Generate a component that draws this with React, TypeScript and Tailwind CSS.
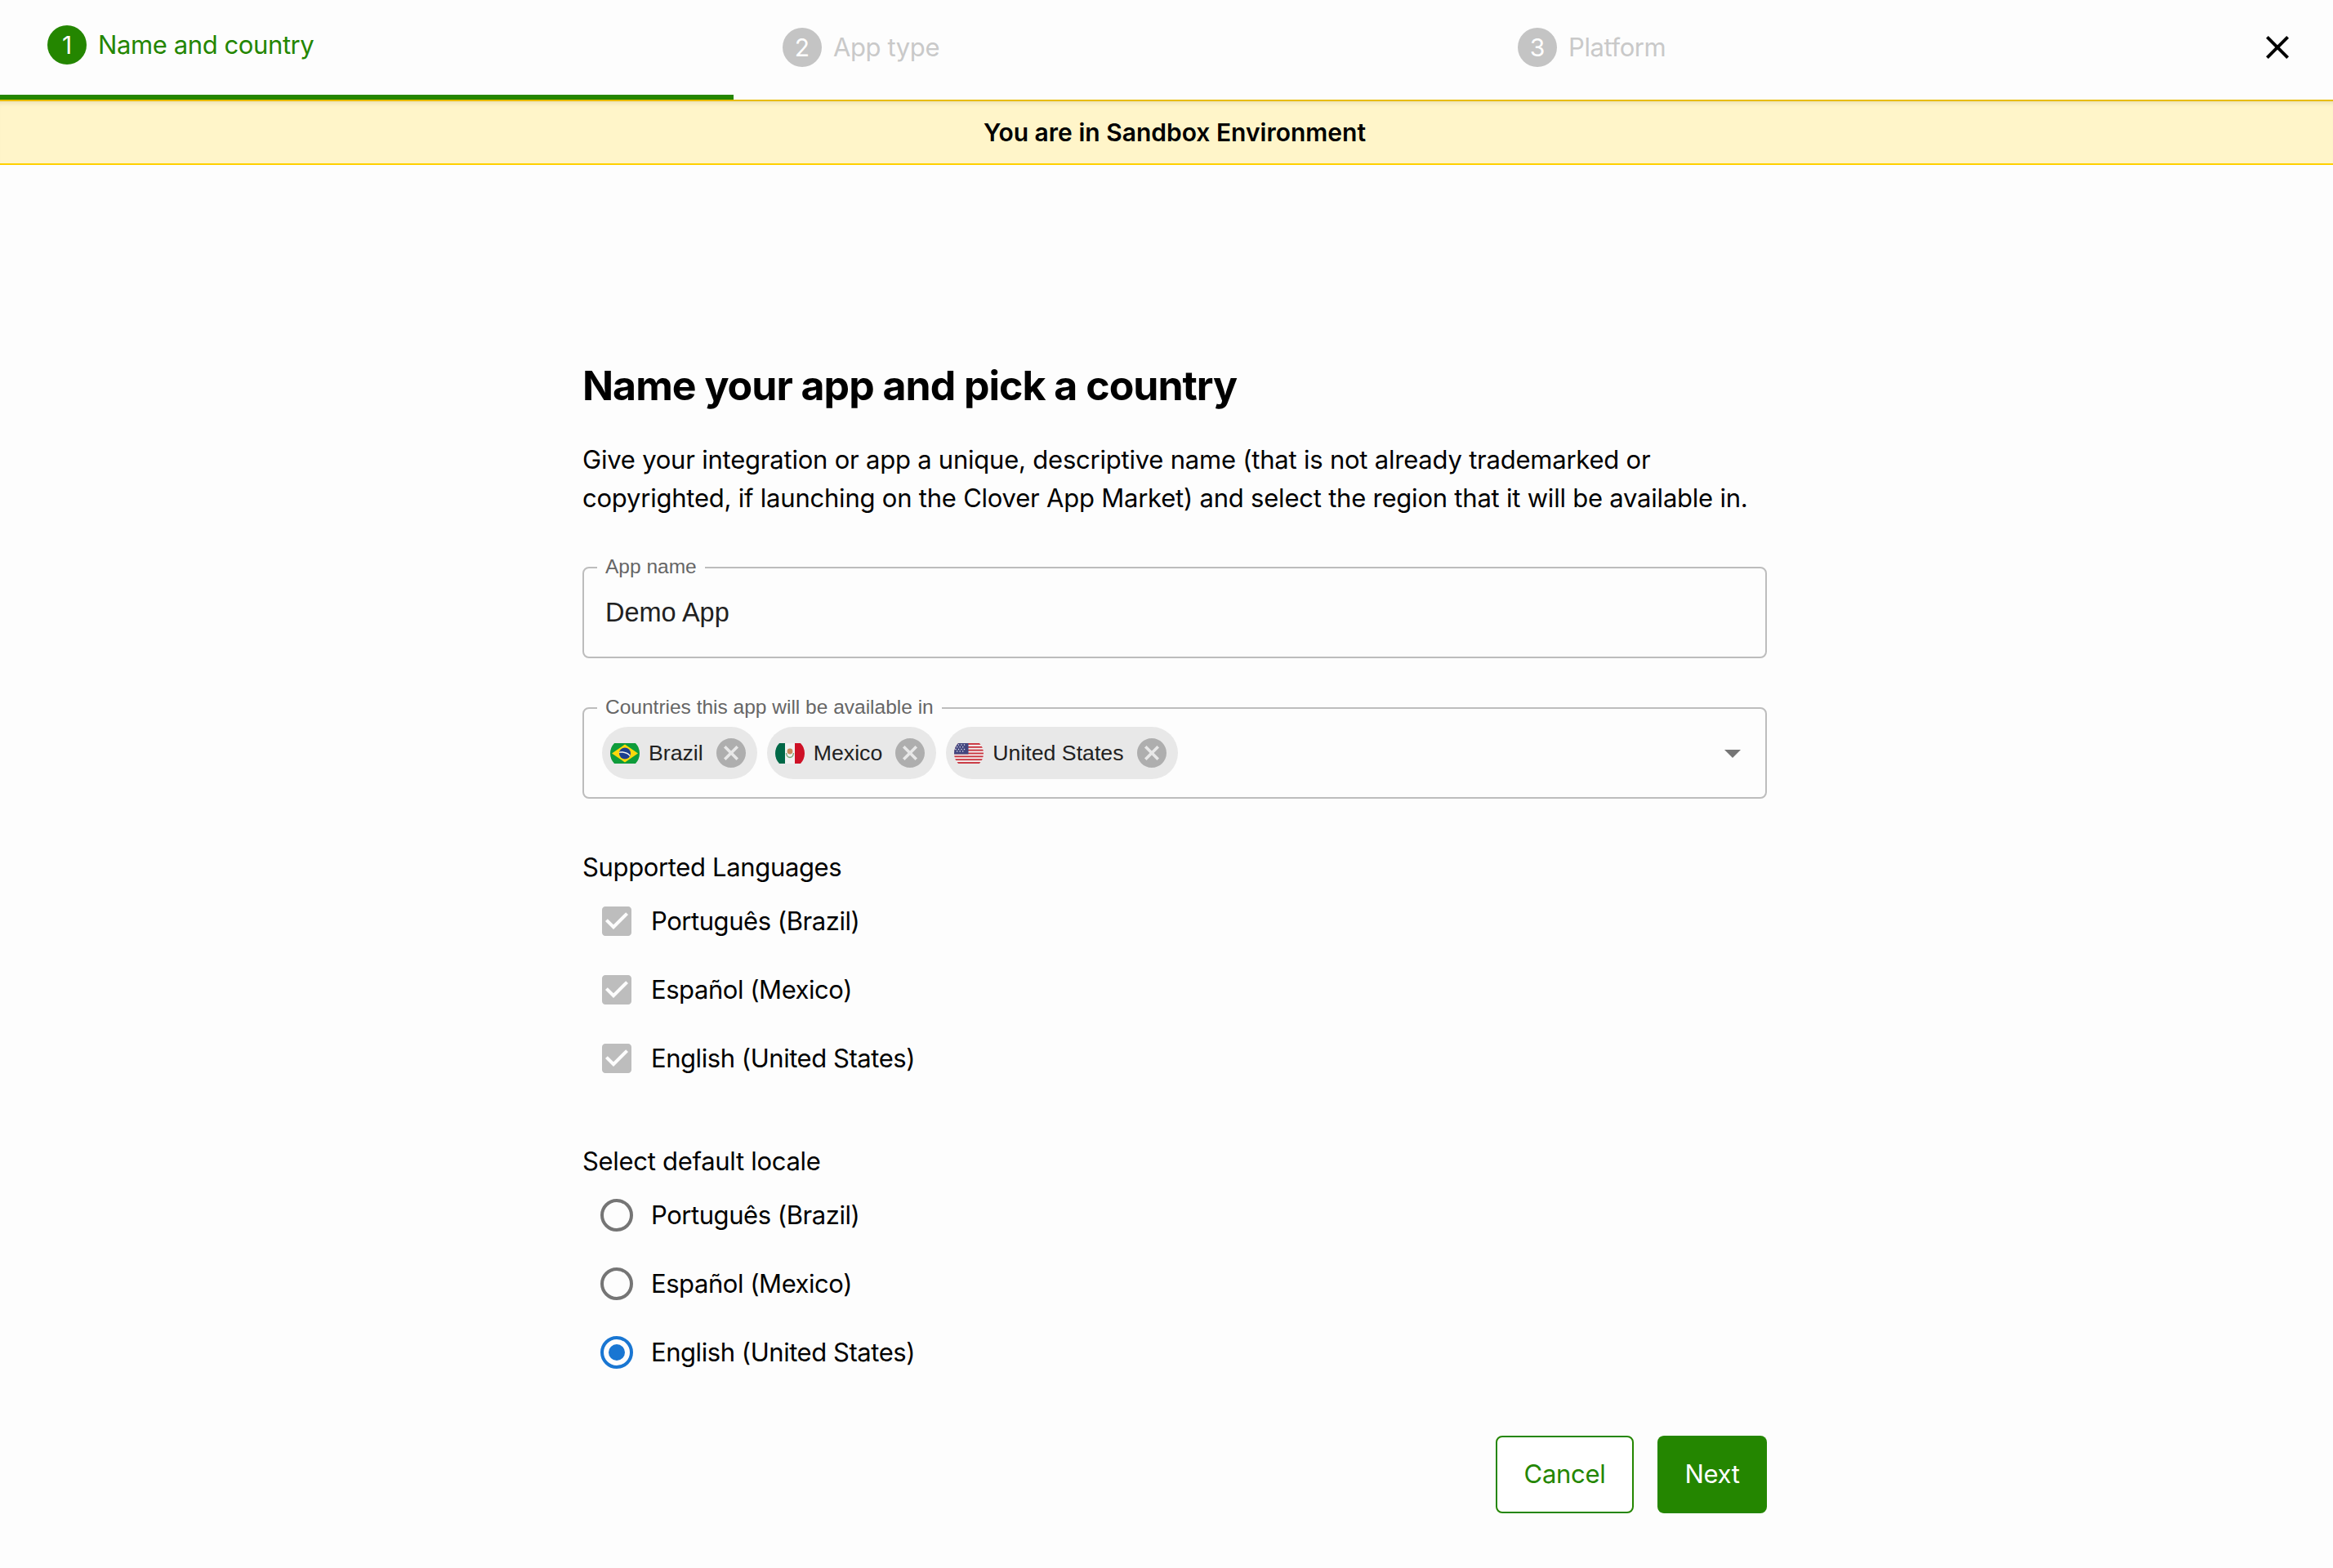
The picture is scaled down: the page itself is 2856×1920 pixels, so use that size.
import type { ReactNode } from 'react'

const body = "font-['Inter',sans-serif]"
const label = "font-['Liberation_Sans',sans-serif]"

function Step({ n, title, active = false }: { n: number; title: string; active?: boolean }) {
  return (
    <div
      className={
        active
          ? 'flex w-[898px] items-center gap-[14px] border-b-[6px] border-[#248600] pb-[6px] pl-[58px]'
          : 'flex w-[900px] items-center gap-[14px] pl-[58px] pb-[6px]'
      }
    >
      <span
        className={`flex h-[48px] w-[48px] items-center justify-center rounded-full text-[30px] text-white ${
          active ? 'bg-[#248600]' : 'bg-[#c4c4c4]'
        }`}
      >
        {n}
      </span>
      <span className={`text-[31px] tracking-[-0.4px] ${active ? 'text-[#248600]' : 'text-[#c9c9c9]'}`}>{title}</span>
    </div>
  )
}

function Brazil() {
  return (
    <svg width="36" height="25" viewBox="0 0 36 25" className="shrink-0">
      <clipPath id="clip-br">
        <circle cx="18" cy="12.5" r="18" />
      </clipPath>
      <g clipPath="url(#clip-br)">
        <rect width="36" height="25" fill="#0e9c3a" />
        <path d="M18 1.5 34 12.5 18 23.5 2 12.5z" fill="#fbd80c" />
        <circle cx="18" cy="12.5" r="7" fill="#1c3f8f" />
        <path d="M11.5 10.5c5-.8 10 .6 13 4.2l-.6 1.4c-3-3.6-8-5-13-4.2z" fill="#f4f4f4" />
      </g>
    </svg>
  )
}

function Mexico() {
  return (
    <svg width="36" height="25" viewBox="0 0 36 25" className="shrink-0">
      <clipPath id="clip-mx">
        <circle cx="18" cy="12.5" r="18" />
      </clipPath>
      <g clipPath="url(#clip-mx)">
        <rect width="12" height="25" fill="#006847" />
        <rect x="12" width="12" height="25" fill="#f2f2f2" />
        <rect x="24" width="12" height="25" fill="#ce1126" />
        <circle cx="18" cy="10" r="3.4" fill="#c98a5a" />
        <path d="M13.5 12c.5 4 2.500 5.500 4.500 5.500s4-1.500 4.500-5.500" fill="none" stroke="#7aa877" strokeWidth="1.400" />
      </g>
    </svg>
  )
}

function UnitedStates() {
  const stripes = [0, 2, 4, 6, 8, 10, 12]
  const stars = [
    [2, 2], [5.500, 2], [9, 2], [12.500, 2],
    [3.700, 4.700], [7.200, 4.700], [10.700, 4.700],
    [2, 7.400], [5.500, 7.400], [9, 7.400], [12.500, 7.400],
    [3.700, 10.100], [7.200, 10.100], [10.700, 10.100],
  ]
  return (
    <svg width="36" height="25" viewBox="0 0 36 25" className="shrink-0">
      <clipPath id="clip-us">
        <circle cx="18" cy="12.500" r="18" />
      </clipPath>
      <g clipPath="url(#clip-us)">
        <rect width="36" height="25" fill="#f4f4f4" />
        {stripes.map((i) => (
          <rect key={i} y={i * 1.923} width="36" height="1.923" fill="#c9353f" />
        ))}
        <rect width="17.500" height="13.500" fill="#43467f" />
        {stars.map(([x, y]) => (
          <circle key={`${x}-${y}`} cx={x} cy={y} r="0.750" fill="#e8e8f0" />
        ))}
      </g>
    </svg>
  )
}

function Chip({ flag, name }: { flag: ReactNode; name: string }) {
  return (
    <div className="flex h-[64px] items-center rounded-full bg-[#e8e8e8] pl-[10px] pr-[14px]">
      {flag}
      <span className={`ml-[11px] pt-px text-[26.7px] text-[#212121] ${label}`}>{name}</span>
      <svg viewBox="2 2 20 20" className="ml-[16px] h-[36px] w-[36px] fill-[#aeaeae]">
        <path d="M12 2C6.470 2 2 6.470 2 12s4.470 10 10 10 10-4.470 10-10S17.530 2 12 2zm5 13.590L15.590 17 12 13.410 8.410 17 7 15.590 10.590 12 7 8.410 8.410 7 12 10.590 15.590 7 17 8.410 13.410 12 17 15.590z" />
      </svg>
    </div>
  )
}

function Field({ title, children }: { title: string; children: ReactNode }) {
  return (
    <fieldset className="min-w-0 rounded-[8px] border-2 border-[#bdbdbd]">
      <legend className={`ml-[16px] h-[28px] px-[10px] text-[24.5px] leading-[26px] text-[#666666] ${label}`}>
        {title}
      </legend>
      {children}
    </fieldset>
  )
}

function CheckRow({ text }: { text: string }) {
  return (
    <div className="flex h-[84px] items-center pl-[24px]">
      <svg viewBox="3 3 18 18" className="h-[36px] w-[36px] fill-[#bdbdbd]">
        <path d="M19 3H5c-1.110 0-2 .9-2 2v14c0 1.100.89 2 2 2h14c1.110 0 2-.9 2-2V5c0-1.100-.89-2-2-2zm-9 14l-5-5 1.410-1.410L10 14.170l7.590-7.590L19 8l-9 9z" />
      </svg>
      <span className="ml-[24px] text-[31px] leading-[40px] tracking-[-0.45px] text-black">{text}</span>
    </div>
  )
}

function RadioRow({ text, checked = false }: { text: string; checked?: boolean }) {
  return (
    <div className="flex h-[84px] items-center pl-[22px]">
      <span
        className={`flex h-[40px] w-[40px] items-center justify-center rounded-full border-[4px] ${
          checked ? 'border-[#1976d2]' : 'border-[#757575]'
        }`}
      >
        {checked && <span className="h-[20px] w-[20px] rounded-full bg-[#1976d2]" />}
      </span>
      <span className="ml-[22px] text-[31px] leading-[40px] tracking-[-0.45px] text-black">{text}</span>
    </div>
  )
}

export default function App() {
  return (
    <div className={`min-h-[1920px] bg-[#fdfdfd] ${body}`}>
      <header className="flex h-[122px]">
        <Step n={1} title="Name and country" active />
        <div className="w-[2px]" />
        <Step n={2} title="App type" />
        <Step n={3} title="Platform" />
        <svg viewBox="5 5 14 14" className="mt-[44px] ml-[74px] h-[28px] w-[28px] fill-black">
          <path d="M19 6.410 17.590 5 12 10.590 6.410 5 5 6.410 10.590 12 5 17.590 6.410 19 12 13.410 17.590 19 19 17.590 13.410 12z" />
        </svg>
      </header>

      <div className="flex h-[80px] items-center justify-center border-t-2 border-b-2 border-t-[#e8bc00] border-b-[#ffd000] bg-[#fff5c9] pl-[20px] text-[30px] font-semibold text-black shadow-[inset_0_6px_6px_-5px_rgba(0,0,0,0.12)]">
        You are in Sandbox Environment
      </div>

      <main className="ml-[713px] w-[1450px] pt-[240px]">
        <h1 className="text-[50px] leading-[60px] font-bold tracking-[-1px] text-black">Name your app and pick a country</h1>
        <p className="mt-[37px] text-[31px] leading-[47px] tracking-[-0.22px] text-black">
          Give your integration or app a unique, descriptive name (that is not already trademarked or copyrighted, if launching on the Clover App Market) and select the region that it will be available in.
        </p>

        <div className="mt-[48px]">
          <Field title="App name">
            <div className="flex h-[95px] items-start pl-[26px] pt-[21px]">
              <span className={`text-[32.5px] leading-[40px] text-[#212121] ${label}`}>Demo App</span>
            </div>
          </Field>
        </div>

        <div className="mt-[47px]">
          <Field title="Countries this app will be available in">
            <div className="flex h-[95px] items-start justify-between pl-[22px] pr-[30px] pt-[9px]">
              <div className="flex gap-[12px]">
                <Chip flag={<Brazil />} name="Brazil" />
                <Chip flag={<Mexico />} name="Mexico" />
                <Chip flag={<UnitedStates />} name="United States" />
              </div>
              <svg viewBox="0 0 20 10" className="mt-[28px] h-[10px] w-[20px] fill-[#757575]">
                <path d="M0 0h20L10 10z" />
              </svg>
            </div>
          </Field>
        </div>

        <h2 className="mt-[68px] text-[31px] leading-[32px] font-normal tracking-[-0.35px] text-black">Supported Languages</h2>
        <div className="mt-[8px]">
          <CheckRow text="Português (Brazil)" />
          <CheckRow text="Español (Mexico)" />
          <CheckRow text="English (United States)" />
        </div>

        <h2 className="mt-[68px] text-[31px] leading-[32px] font-normal tracking-[-0.3px] text-black">Select default locale</h2>
        <div className="mt-[8px]">
          <RadioRow text="Português (Brazil)" />
          <RadioRow text="Español (Mexico)" />
          <RadioRow text="English (United States)" checked />
        </div>

        <div className="mt-[60px] flex justify-end gap-[29px]">
          <button className="h-[95px] w-[169px] rounded-[8px] border-2 border-[#248600] bg-white text-[31px] tracking-[-0.3px] text-[#248600]">
            Cancel
          </button>
          <button className="h-[95px] w-[134px] rounded-[8px] bg-[#248600] text-[31px] tracking-[-0.3px] text-white">Next</button>
        </div>
      </main>
    </div>
  )
}
